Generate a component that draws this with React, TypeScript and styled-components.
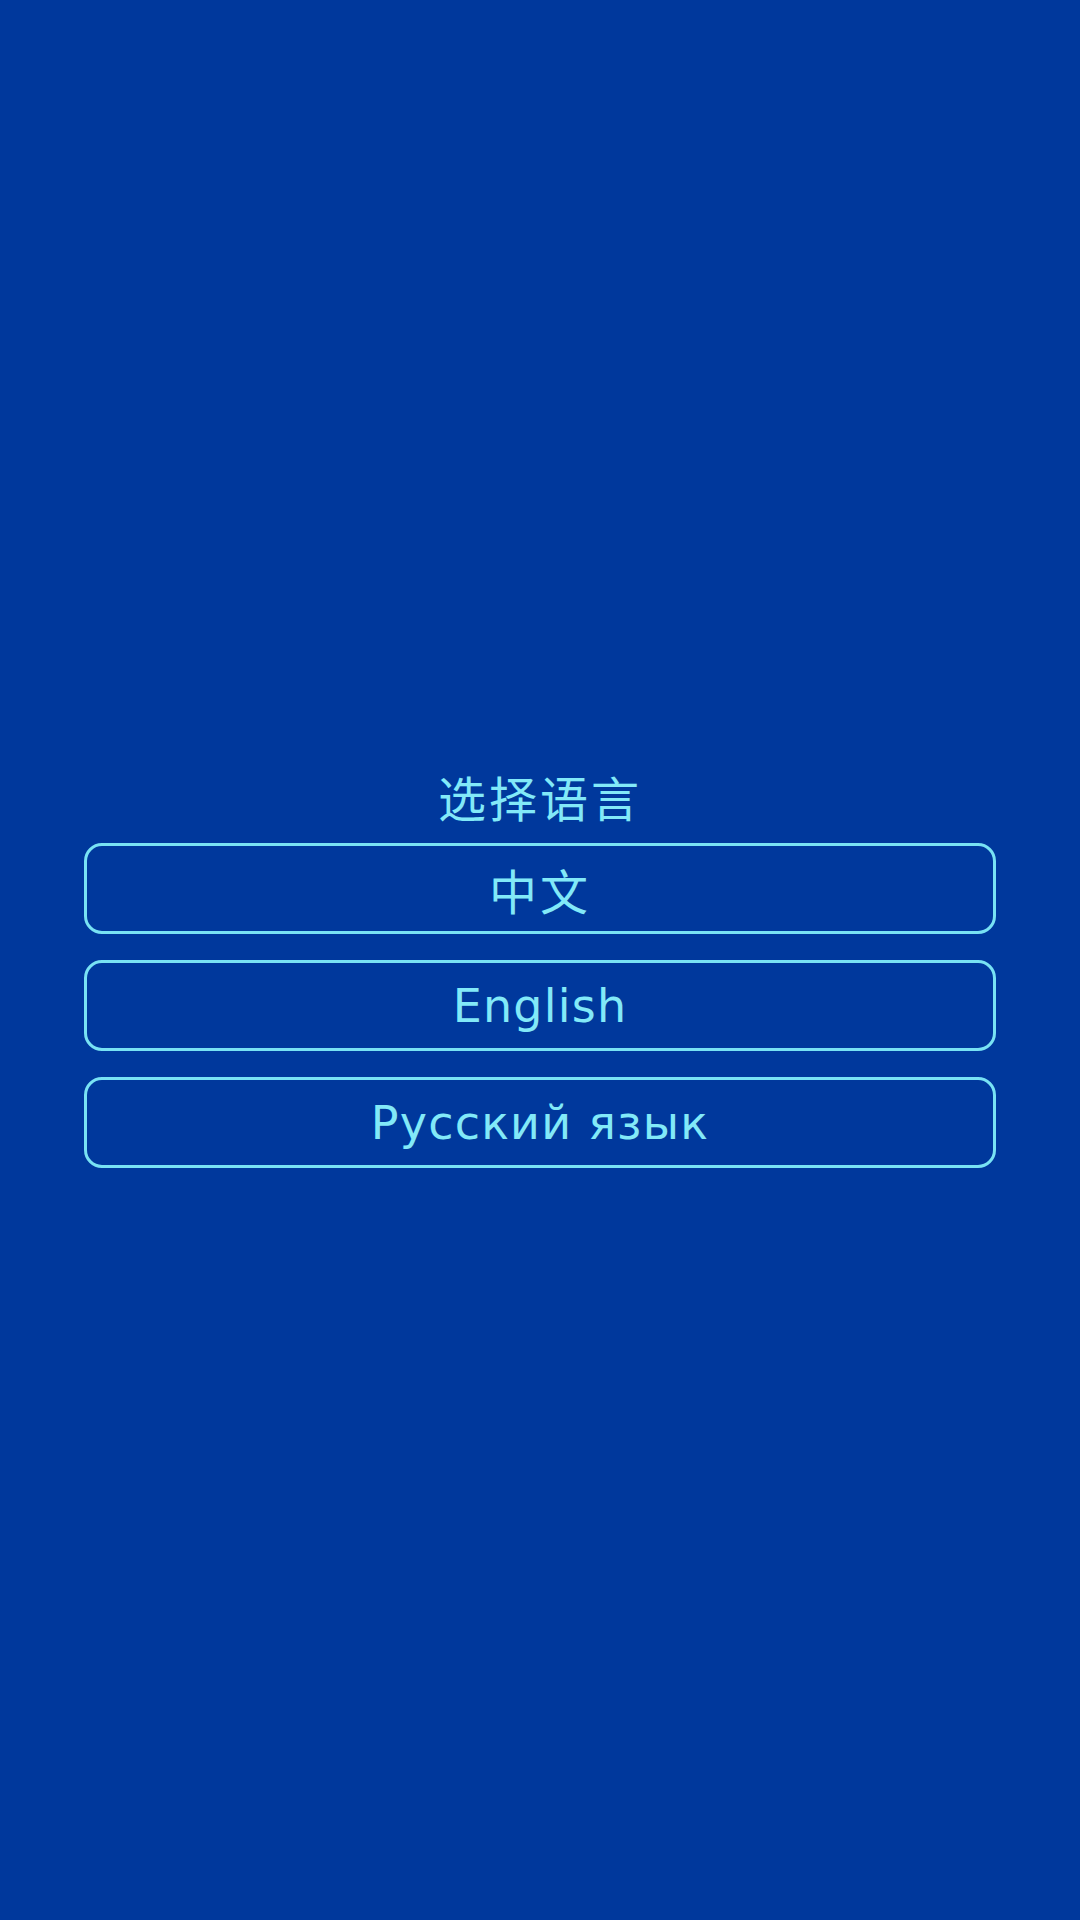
import React from 'react';
import styled, { createGlobalStyle } from 'styled-components';

const GlobalStyle = createGlobalStyle`
    html, body {
        margin: 0;
        padding: 0;
        background: #00389c;
    }
`;

const Page = styled.main`
    box-sizing: border-box;
    min-height: 1920px;
    width: 1080px;
    padding: 14px 84px 0;
    display: flex;
    flex-direction: column;
    justify-content: center;
    background: #00389c;
    font-family: "DejaVu Sans", "Noto Sans CJK SC", sans-serif;
    color: #82e9f8;
`;

const Title = styled.h1`
    margin: 0 0 17px;
    height: 60px;
    line-height: 60px;
    text-align: center;
    font-family: "Noto Sans CJK SC", sans-serif;
    font-size: 48px;
    font-weight: 400;
    letter-spacing: 3px;
`;

const List = styled.div`
    display: flex;
    flex-direction: column;
    gap: 26px;
`;

const LangButton = styled.button<{ $cjk?: boolean }>`
    box-sizing: border-box;
    height: 91px;
    width: 100%;
    border: 3px solid #78e2f4;
    border-radius: 18px;
    background: transparent;
    color: #82e9f8;
    font-family: ${p => p.$cjk ? '"Noto Sans CJK SC", sans-serif' : '"DejaVu Sans", sans-serif'};
    font-size: ${p => p.$cjk ? '48px' : '46px'};
    letter-spacing: ${p => p.$cjk ? '3px' : '1.2px'};
    cursor: pointer;
    display: flex;
    align-items: center;
    justify-content: center;
    padding: 0;
`;

const languages = [
    { label: '中文', cjk: true },
    { label: 'English', cjk: false },
    { label: 'Русский язык', cjk: false },
];

export default function App()
{
    return (
        <>
            <GlobalStyle />
            <Page>
                <Title>选择语言</Title>
                <List>
                    {languages.map(l => (
                        <LangButton key={l.label} $cjk={l.cjk}>{l.label}</LangButton>
                    ))}
                </List>
            </Page>
        </>
    );
}
